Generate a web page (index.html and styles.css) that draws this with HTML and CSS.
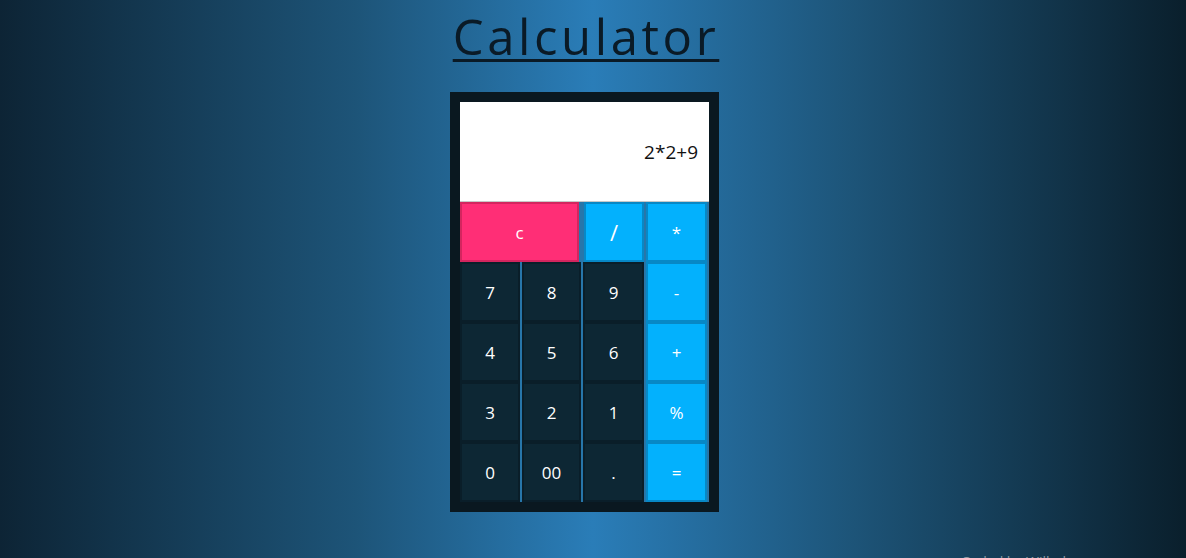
FILE: index.html
```html
<!DOCTYPE html>
<html lang="en">
<head>
<meta charset="utf-8">
<title>Calculator</title>
<link rel="stylesheet" href="styles.css">
</head>
<body>
<div class="page">
  <h1 class="title">Calculator</h1>
  <div class="calc">
    <div class="display">2*2+9</div>
    <div class="keys">
      <button class="key key-clear">c</button>
      <button class="key key-op key-slash">/</button>
      <button class="key key-op">*</button>
      <button class="key">7</button>
      <button class="key">8</button>
      <button class="key">9</button>
      <button class="key key-op">-</button>
      <button class="key">4</button>
      <button class="key">5</button>
      <button class="key">6</button>
      <button class="key key-op">+</button>
      <button class="key">3</button>
      <button class="key">2</button>
      <button class="key">1</button>
      <button class="key key-op">%</button>
      <button class="key">0</button>
      <button class="key">00</button>
      <button class="key">.</button>
      <button class="key key-op">=</button>
    </div>
  </div>
  <footer class="footer">Coded by Wilhelm</footer>
</div>
</body>
</html>
```

FILE: styles.css
```css
html, body {
  margin: 0;
  padding: 0;
}

body {
  min-height: 100vh;
  background: linear-gradient(to right, #0d2435 0%, #1d5478 30%, #2a7db8 50%, #1d5478 72%, #0a1f2c 100%);
  font-family: "Open Sans", "Liberation Sans", sans-serif;
  overflow: hidden;
}

.page {
  padding-right: 17px;
  display: flex;
  flex-direction: column;
  align-items: center;
}

.title {
  margin: 0;
  padding-left: 3px;
  font-size: 49px;
  font-weight: 400;
  line-height: 72px;
  color: #0a1a26;
  letter-spacing: 3.6px;
  text-decoration: underline;
  text-decoration-thickness: 3px;
  text-underline-offset: 4px;
}

.calc {
  margin-top: 20px;
  width: 249px;
  padding: 10px;
  background: #0a1820;
}

.display {
  height: 99px;
  border-bottom: 1px solid #c8c8c8;
  background: #ffffff;
  display: flex;
  align-items: center;
  justify-content: flex-end;
  padding-right: 11px;
  font-size: 19px;
  color: #111111;
}

.keys {
  display: grid;
  grid-template-columns: 60px 59px 61px 61px;
  grid-auto-rows: 60px;
  column-gap: 2px;
  padding-right: 2px;
  background: #2776aa;
}

.key {
  margin: 0;
  padding: 0;
  border: 2px solid #0a1e29;
  background: #0d2734;
  color: #ffffff;
  font-family: "Open Sans", "Liberation Sans", sans-serif;
  font-size: 17px;
  font-weight: 500;
  display: flex;
  align-items: center;
  justify-content: center;
}

.key-op {
  background: #03b1fd;
  border-color: #0788c6;
}

.key-slash {
  margin-left: 1px;
  font-size: 22px;
  font-weight: 400;
}

.key-clear {
  grid-column: span 2;
  margin-right: 2px;
  background: #ff2e76;
  border-color: #d4255f;
  font-size: 17px;
}

.footer {
  align-self: flex-end;
  margin-top: 40px;
  padding-right: 90px;
  font-size: 14px;
  line-height: 20px;
  color: #8d9aa4;
}
```
